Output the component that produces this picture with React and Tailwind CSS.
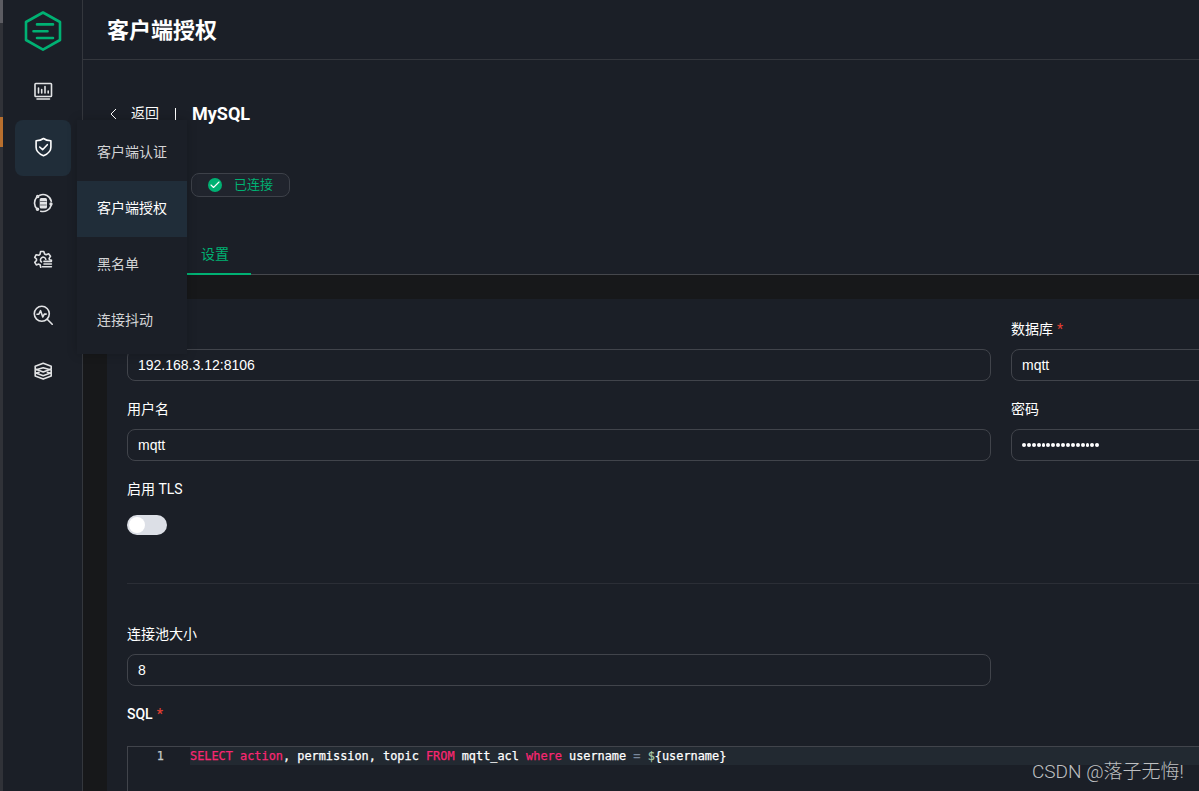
import { Check } from "lucide-react";

const menuItems = ["客户端认证", "客户端授权", "黑名单", "连接抖动"];

function Icon({ children }) {
    return (
        <svg
            className="w-5 h-5"
            viewBox="0 0 20 20"
            fill="none"
            stroke="currentColor"
            strokeWidth="1.6"
            strokeLinecap="round"
            strokeLinejoin="round"
        >
            {children}
        </svg>
    );
}

const navIcons = [
    <Icon key="monitor">
        <rect x="2" y="2.5" width="16.500" height="13" rx="0.8" />
        <path d="M5.500 7v5M8.700 8.500v3.500M12 5.500V12M15.200 10v2M4 18h12.500" />
    </Icon>,
    <Icon key="access">
        <path d="M10.500 1.500c2.200 1.700 4.500 2.200 7.400 2.300v6.400c0 4-3 6.600-7.400 8.500-4.400-1.900-7.400-4.500-7.400-8.500V3.800c2.900-.1 5.200-.6 7.400-2.300z" />
        <path d="M6.700 10l2.900 2.700 4.700-5" />
    </Icon>,
    <Icon key="integration">
        <path d="M6.800 2.200a8.500 8.500 0 0 1 11.500 6M18.200 12.200a8.500 8.500 0 0 1-10.500 6M4 16A8.600 8.600 0 0 1 3.500 4.500" />
        <circle cx="4.700" cy="3.500" r="1" />
        <circle cx="18" cy="11" r="0.900" />
        <circle cx="4.500" cy="16.300" r="1" />
        <rect x="6.700" y="5" width="7.300" height="10.500" rx="1.500" fill="currentColor" stroke="none" />
        <path d="M7.500 8.500h5.700M7.500 12h5.700" stroke="#1c1f27" strokeWidth="0.600" />
    </Icon>,
    <Icon key="management">
        <path d="M7.700 18.300l-.6-2.500-1.400-.7-2.400.8-1.500-2.500 1.700-1.900V10L1.700 8.300l1.500-2.600 2.500.6 1.300-.9.6-2.900h3.200l.8 2.500 1.500.7 2.500-1 1.900 2.600-1.400 2.100.4 1.300 2 .6" />
        <path d="M8.500 13a2.700 2.700 0 1 1 4.300-2.700" />
        <path d="M11 12.400h7.400M11 15h7.400M9.500 17.700h8.900" />
    </Icon>,
    <Icon key="diagnose">
        <circle cx="8.800" cy="8.800" r="7.500" />
        <path d="M14.200 14.200l5 5M4 9.200h1.900l1.700-3.500 2.200 6.300 1.500-2.900h1.900" />
    </Icon>,
    <Icon key="system">
        <path d="M10.200 2.200l8 3v2.800l-8 3-8-3V5.200z" />
        <path d="M10.200 6.800l8 2.200v2.800l-8 3-8-3V9z" />
        <path d="M6 11.200l-3.800 1.300v2.600l8 3 8-3v-2.600l-3.800-1.300" />
    </Icon>,
];

function Sidebar() {
    return (
        <aside className="w-20 shrink-0 border-r border-[#34373d] flex flex-col items-center">
            <svg
                className="w-10 h-10 mt-[11px] shrink-0"
                viewBox="0 0 40 40"
                fill="none"
                stroke="#00b173"
                strokeWidth="2.6"
                strokeLinecap="round"
                strokeLinejoin="round"
            >
                <path d="M20 1.500l17 9.500v18l-17 9.700L3 29V11z" />
                <path d="M14 13.400h16M10.500 20.200h14M14 27h16" />
            </svg>
            <nav className="mt-[13px]">
                {navIcons.map((icon, i) => (
                    <div
                        key={i}
                        className={
                            i === 1
                                ? "w-14 h-14 pb-0.5 flex items-center justify-center rounded-lg bg-[#202d39] text-white"
                                : "w-14 h-14 pb-0.5 flex items-center justify-center text-[#e2e3e5]"
                        }
                    >
                        {icon}
                    </div>
                ))}
            </nav>
        </aside>
    );
}

function SubMenu() {
    return (
        <div className="absolute left-[77px] top-[120px] z-10 w-[110px] h-[234px] pt-[5px] bg-[#1b1f27] shadow-[0_0_10px_rgba(0,0,0,0.2)]">
            {menuItems.map((item, i) => (
                <div
                    key={item}
                    className={
                        i === 1
                            ? "h-14 pl-5 pb-[3px] flex items-center bg-[#202d39] text-white"
                            : "h-14 pl-5 pb-[3px] flex items-center text-[#d3d4d6]"
                    }
                >
                    {item}
                </div>
            ))}
        </div>
    );
}

function Field({ label, value, required, className }) {
    return (
        <div className={className}>
            <div className="h-10 flex items-center gap-1 text-white">
                {label}
                {required && <span className="text-[#e43f32]">*</span>}
            </div>
            <div className="h-8 px-2.5 flex items-center rounded-lg border border-[#41444b] text-white font-['Liberation_Sans',sans-serif]">
                {value}
            </div>
        </div>
    );
}

function PasswordDots() {
    return (
        <div className="flex gap-px">
            {Array.from({ length: 16 }, (_, i) => (
                <span key={i} className="w-[3.9px] h-[3.9px] rounded-full bg-white" />
            ))}
        </div>
    );
}

function SqlEditor() {
    return (
        <div className="mt-3 h-[60px] w-[1100px] flex border-t border-l border-[#41444b] font-['DejaVu_Sans_Mono','Liberation_Mono',monospace] text-[11.88px] leading-[18px] text-white [-webkit-text-stroke:0.25px]">
            <div className="w-[62px] shrink-0 pr-[26px] text-right text-[#c5c8c6]">1</div>
            <div className="flex-1 h-[18px] bg-[#222931] whitespace-pre">
                <span className="text-[#f92672]">SELECT action</span>, permission, topic{" "}
                <span className="text-[#f92672]">FROM</span> mqtt_acl{" "}
                <span className="text-[#f92672]">where</span> username{" "}
                <span className="text-[#78879b]">=</span>{" "}
                <span className="text-[#a7c7a5]">$</span>
                {"{username}"}
            </div>
        </div>
    );
}

export default function App() {
    return (
        <div className="relative w-[1199px] h-[791px] overflow-hidden flex bg-[#1b1f27] font-['Roboto','Noto_Sans_CJK_SC',sans-serif] text-sm text-white">
            {/* Strip of the window behind */}
            <div className="w-[3px] shrink-0 flex flex-col bg-[#303238]">
                <div className="h-[23px] bg-[#5c5c62]" />
                <div className="mt-[94px] h-[30px] bg-[#b86f2e]" />
            </div>
            <Sidebar />
            <SubMenu />

            <div className="flex-1 min-w-0 flex flex-col">
                <header className="h-[60px] shrink-0 pl-6 pt-0.5 flex items-center border-b border-[#34373d]">
                    <h1 className="text-[22px] leading-none font-bold">客户端授权</h1>
                </header>

                <section className="h-[215px] shrink-0 pt-10 flex flex-col">
                    <div className="h-7 pl-[27px] flex items-center">
                        <svg className="w-[7px] h-3" viewBox="0 0 7 12" fill="none" stroke="currentColor">
                            <path d="M6 1L1 6l5 5" />
                        </svg>
                        <span className="ml-[14px] -mt-0.5">返回</span>
                        <span className="ml-4 w-px h-[13px] bg-white" />
                        <span className="ml-4 text-lg font-bold">MySQL</span>
                    </div>
                    <div className="mt-[45px] ml-[108px] w-[99px] h-6 pl-4 flex items-center rounded-lg border border-[#3d4149] bg-[#20242d] text-[13px] text-[#00b173]">
                        <span className="w-3.5 h-3.5 flex items-center justify-center rounded-full bg-[#00b173]">
                            <Check className="w-3 h-3 text-white" strokeWidth={2.2} />
                        </span>
                        <span className="ml-3">已连接</span>
                    </div>
                    <div className="mt-auto border-b border-[#45474c] flex">
                        <div className="ml-[86px] w-[82px] h-10 pl-8 flex items-center -mb-px border-b-2 border-[#00b173] text-[#00b173]">
                            设置
                        </div>
                    </div>
                </section>

                <main className="flex-1 pt-6 pl-6 bg-[#17181a]">
                    <div className="h-full pt-2.5 pl-5 bg-[#1b1f27] overflow-hidden">
                        <div className="flex gap-5">
                            <Field className="w-[864px] shrink-0" value="192.168.3.12:8106" />
                            <Field className="w-[864px] shrink-0" label="数据库" required value="mqtt" />
                        </div>
                        <div className="mt-2 flex gap-5">
                            <Field className="w-[864px] shrink-0" label="用户名" value="mqtt" />
                            <Field className="w-[864px] shrink-0" label="密码" value={<PasswordDots />} />
                        </div>
                        <div className="mt-2 h-10 flex items-center">启用 TLS</div>
                        <div className="mt-1.5 w-10 h-5 p-0.5 rounded-full bg-[#dcdfe6]">
                            <div className="w-4 h-4 rounded-full bg-white" />
                        </div>
                        <div className="mt-12 border-t border-[#2b2e36]" />
                        <Field className="mt-[30px] w-[864px]" label="连接池大小" value="8" />
                        <div className="mt-2 h-10 flex items-center gap-1 font-medium">
                            SQL <span className="text-[#e43f32]">*</span>
                        </div>
                        <SqlEditor />
                    </div>
                </main>
            </div>

            <div className="absolute left-[1032px] top-[760px] whitespace-nowrap text-[19px] leading-6 text-[#bfc0c2] font-['Roboto','Noto_Sans_CJK_SC',sans-serif] font-light">
                CSDN @落子无悔!
            </div>
        </div>
    );
}
